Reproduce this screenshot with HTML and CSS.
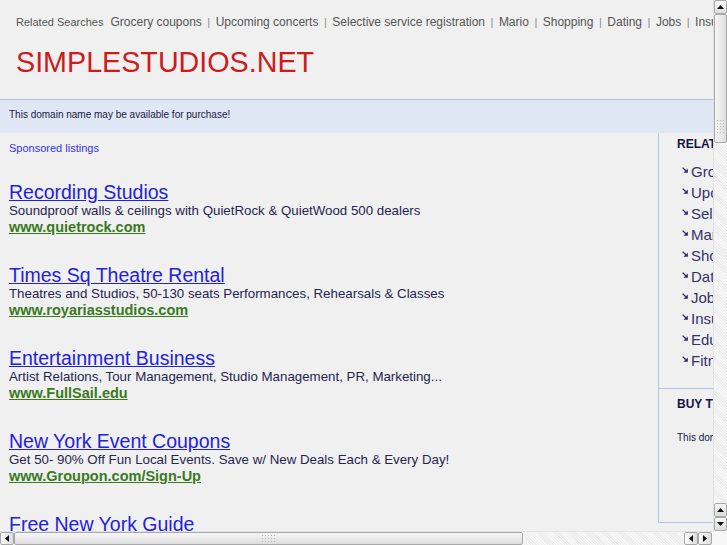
FILE: index.html
```html
<!DOCTYPE html>
<html>
<head>
<meta charset="utf-8">
<title>simplestudios.net</title>
<link rel="stylesheet" href="styles.css">
</head>
<body>
<div class="window">
  <div class="viewport">
    <div class="page">
      <div class="header">
        <div class="topbar"><span class="rs-label">Related Searches</span><a class="tlink">Grocery coupons</a><span class="sep">|</span><a class="tlink">Upcoming concerts</a><span class="sep">|</span><a class="tlink">Selective service registration</a><span class="sep">|</span><a class="tlink">Mario</a><span class="sep">|</span><a class="tlink">Shopping</a><span class="sep">|</span><a class="tlink">Dating</a><span class="sep">|</span><a class="tlink">Jobs</a><span class="sep">|</span><a class="tlink">Insurance</a><span class="sep">|</span><a class="tlink">Education</a><span class="sep">|</span><a class="tlink">Fitness</a></div>
        <h1 class="domain">SIMPLESTUDIOS.NET</h1>
      </div>
      <div class="notice">This domain name may be available for purchase!</div>
      <div class="body">
        <div class="main">
          <div class="sponsored">Sponsored listings</div>
          <div class="listing">
            <a class="ltitle">Recording Studios</a>
            <div class="ldesc">Soundproof walls &amp; ceilings with QuietRock &amp; QuietWood 500 dealers</div>
            <a class="lurl">www.quietrock.com</a>
          </div>
          <div class="listing">
            <a class="ltitle">Times Sq Theatre Rental</a>
            <div class="ldesc">Theatres and Studios, 50-130 seats Performances, Rehearsals &amp; Classes</div>
            <a class="lurl">www.royariasstudios.com</a>
          </div>
          <div class="listing">
            <a class="ltitle">Entertainment Business</a>
            <div class="ldesc">Artist Relations, Tour Management, Studio Management, PR, Marketing...</div>
            <a class="lurl">www.FullSail.edu</a>
          </div>
          <div class="listing">
            <a class="ltitle">New York Event Coupons</a>
            <div class="ldesc">Get 50- 90% Off Fun Local Events. Save w/ New Deals Each &amp; Every Day!</div>
            <a class="lurl">www.Groupon.com/Sign-Up</a>
          </div>
          <div class="listing">
            <a class="ltitle">Free New York Guide</a>
            <div class="ldesc">Get Free Maps, Guides &amp; Tips on New York City with our Free Toolbar.</div>
            <a class="lurl">www.NewYorkCity.com</a>
          </div>
        </div>
        <div class="side">
          <div class="side-sec related">
            <div class="side-h">RELATED SEARCHES</div>
            <ul class="side-list">
              <li><svg class="arr" viewBox="0 0 6 6"><path d="M0.6 0.6 L3.8 3.8" stroke="#2a2a66" stroke-width="1.3"/><path d="M5.8 1.5 L5.8 5.8 L1.5 5.8 Z" fill="#2a2a66"/></svg><a>Grocery coupons</a></li>
              <li><svg class="arr" viewBox="0 0 6 6"><path d="M0.6 0.6 L3.8 3.8" stroke="#2a2a66" stroke-width="1.3"/><path d="M5.8 1.5 L5.8 5.8 L1.5 5.8 Z" fill="#2a2a66"/></svg><a>Upcoming concerts</a></li>
              <li><svg class="arr" viewBox="0 0 6 6"><path d="M0.6 0.6 L3.8 3.8" stroke="#2a2a66" stroke-width="1.3"/><path d="M5.8 1.5 L5.8 5.8 L1.5 5.8 Z" fill="#2a2a66"/></svg><a>Selective service registration</a></li>
              <li><svg class="arr" viewBox="0 0 6 6"><path d="M0.6 0.6 L3.8 3.8" stroke="#2a2a66" stroke-width="1.3"/><path d="M5.8 1.5 L5.8 5.8 L1.5 5.8 Z" fill="#2a2a66"/></svg><a>Mario</a></li>
              <li><svg class="arr" viewBox="0 0 6 6"><path d="M0.6 0.6 L3.8 3.8" stroke="#2a2a66" stroke-width="1.3"/><path d="M5.8 1.5 L5.8 5.8 L1.5 5.8 Z" fill="#2a2a66"/></svg><a>Shopping</a></li>
              <li><svg class="arr" viewBox="0 0 6 6"><path d="M0.6 0.6 L3.8 3.8" stroke="#2a2a66" stroke-width="1.3"/><path d="M5.8 1.5 L5.8 5.8 L1.5 5.8 Z" fill="#2a2a66"/></svg><a>Dating</a></li>
              <li><svg class="arr" viewBox="0 0 6 6"><path d="M0.6 0.6 L3.8 3.8" stroke="#2a2a66" stroke-width="1.3"/><path d="M5.8 1.5 L5.8 5.8 L1.5 5.8 Z" fill="#2a2a66"/></svg><a>Jobs</a></li>
              <li><svg class="arr" viewBox="0 0 6 6"><path d="M0.6 0.6 L3.8 3.8" stroke="#2a2a66" stroke-width="1.3"/><path d="M5.8 1.5 L5.8 5.8 L1.5 5.8 Z" fill="#2a2a66"/></svg><a>Insurance</a></li>
              <li><svg class="arr" viewBox="0 0 6 6"><path d="M0.6 0.6 L3.8 3.8" stroke="#2a2a66" stroke-width="1.3"/><path d="M5.8 1.5 L5.8 5.8 L1.5 5.8 Z" fill="#2a2a66"/></svg><a>Education</a></li>
              <li><svg class="arr" viewBox="0 0 6 6"><path d="M0.6 0.6 L3.8 3.8" stroke="#2a2a66" stroke-width="1.3"/><path d="M5.8 1.5 L5.8 5.8 L1.5 5.8 Z" fill="#2a2a66"/></svg><a>Fitness</a></li>
            </ul>
          </div>
          <div class="side-sec buy">
            <div class="side-h">BUY THIS DOMAIN</div>
            <div class="buy-text">This domain may be for sale by its owner!</div>
          </div>
        </div>
      </div>
    </div>
  </div>
  <div class="vscroll">
    <div class="sbtn"><svg viewBox="0 0 7 4"><path d="M0 4 L3.5 0 L7 4 Z" fill="#111"/></svg></div>
    <div class="vthumb"><div class="grip vgrip"></div></div>
    <div class="vtrack"></div>
    <div class="sbtn"><svg viewBox="0 0 7 4"><path d="M0 4 L3.5 0 L7 4 Z" fill="#111"/></svg></div>
    <div class="sbtn"><svg viewBox="0 0 7 4"><path d="M0 0 L3.5 4 L7 0 Z" fill="#111"/></svg></div>
  </div>
  <div class="hscroll">
    <div class="sbtn"><svg class="h" viewBox="0 0 4 7"><path d="M4 0 L0 3.5 L4 7 Z" fill="#111"/></svg></div>
    <div class="hthumb"><div class="grip hgrip"></div></div>
    <div class="htrack"></div>
    <div class="sbtn"><svg class="h" viewBox="0 0 4 7"><path d="M4 0 L0 3.5 L4 7 Z" fill="#111"/></svg></div>
    <div class="sbtn"><svg class="h" viewBox="0 0 4 7"><path d="M0 0 L4 3.5 L0 7 Z" fill="#111"/></svg></div>
    <div class="hgap"></div>
  </div>
  <div class="corner"></div>
</div>
</body>
</html>
```

FILE: styles.css
```css
html, body {
  margin: 0;
  padding: 0;
  overflow: hidden;
  background: #f0f0f0;
}

.window {
  width: 727px;
  height: 545px;
  display: grid;
  grid-template-columns: 713px 14px;
  grid-template-rows: 531px 14px;
  font-family: "Liberation Sans", Arial, sans-serif;
}

.viewport {
  overflow: hidden;
  background: #f0f0f0;
}

.page {
  width: 940px;
}

/* header */
.header {
  padding: 14px 0 20px 0;
  border-bottom: 1px solid #b4c6e6;
}

.topbar {
  padding-left: 16px;
  display: flex;
  align-items: baseline;
  white-space: nowrap;
  line-height: 16px;
  color: #555;
}

.rs-label {
  font-size: 11px;
  margin-right: 7px;
  color: #555;
}

.tlink {
  font-size: 12px;
  color: #555;
}

.sep {
  font-size: 11px;
  color: #8a8a8a;
  margin: 0 5.5px;
}

.domain {
  margin: 15px 0 0 16px;
  font-weight: normal;
  font-size: 28.7px;
  line-height: 34px;
  color: #cc1c1c;
}

.notice {
  background: #dfe6f4;
  font-size: 10px;
  line-height: 12px;
  color: #1a1a44;
  padding: 9px 0 12px 9px;
}

/* body */
.body {
  display: flex;
  align-items: flex-start;
}

.main {
  width: 658px;
  flex: none;
  padding: 8px 0 0 9px;
  box-sizing: border-box;
}

.sponsored {
  font-size: 11px;
  line-height: 14px;
  color: #3434e0;
  margin-bottom: 27px;
}

.listing {
  margin-bottom: 29px;
}

.ltitle {
  display: block;
  font-size: 19.5px;
  line-height: 20px;
  color: #2222dd;
  text-decoration: underline;
  white-space: nowrap;
}

.ldesc {
  font-size: 13.3px;
  line-height: 17px;
  color: #252550;
  white-space: nowrap;
}

.lurl {
  display: block;
  font-size: 14.5px;
  line-height: 17px;
  font-weight: bold;
  color: #3a7a1e;
  text-decoration: underline;
  white-space: nowrap;
}

/* sidebar */
.side {
  width: 260px;
  flex: none;
  border-left: 1px solid #b4c6e6;
  border-bottom: 1px solid #b4c6e6;
  height: 390px;
  box-sizing: border-box;
  white-space: nowrap;
}

.side-sec {
  padding-left: 18px;
}

.related {
  padding-top: 4px;
  padding-bottom: 17px;
  border-bottom: 1px solid #b4c6e6;
}

.side-h {
  font-size: 12px;
  line-height: 14px;
  font-weight: bold;
  color: #151545;
}

.side-list {
  list-style: none;
  margin: 10px 0 0 0;
  padding: 0 0 0 5px;
}

.side-list li {
  display: flex;
  align-items: center;
  height: 21px;
}

.side-list a {
  font-size: 15px;
  color: #33336a;
}

.arr {
  width: 6px;
  height: 6px;
  margin-right: 3px;
  margin-top: -4px;
  flex: none;
}

.buy {
  padding-top: 8px;
}

.buy-text {
  margin-top: 21px;
  font-size: 10px;
  line-height: 12px;
  color: #1a1a44;
}

/* scrollbars */
.vscroll {
  display: flex;
  flex-direction: column;
  background: #f7f7f7;
  border-left: 1px solid #e2e2e2;
  box-sizing: border-box;
}

.hscroll {
  display: flex;
  background: #f7f7f7;
  border-top: 1px solid #e2e2e2;
  box-sizing: border-box;
}

.corner {
  background: #f7f7f7;
}

.sbtn {
  flex: none;
  width: 13px;
  height: 14px;
  box-sizing: border-box;
  border: 1px solid #a8a8a8;
  border-radius: 2px;
  background: linear-gradient(#fafafa, #dcdcdc);
  display: flex;
  align-items: center;
  justify-content: center;
}

.hscroll .sbtn {
  width: 14px;
  height: 13px;
  background: linear-gradient(90deg, #fafafa, #dcdcdc);
}

.sbtn svg {
  width: 7px;
  height: 4px;
}

.sbtn svg.h {
  width: 4px;
  height: 7px;
}

.vthumb {
  flex: none;
  height: 129px;
  width: 13px;
  box-sizing: border-box;
  border: 1px solid #a8a8a8;
  border-radius: 2px;
  background: linear-gradient(90deg, #f6f6f6, #dedede);
  display: flex;
  flex-direction: column;
  justify-content: flex-end;
  align-items: center;
  padding-bottom: 8px;
}

.vtrack {
  flex: 1;
  background: repeating-linear-gradient(45deg, #f8f8f8 0 1px, #ececec 1px 2px);
}

.hthumb {
  flex: none;
  width: 509px;
  height: 13px;
  box-sizing: border-box;
  border: 1px solid #a8a8a8;
  border-radius: 2px;
  background: linear-gradient(#f6f6f6, #dedede);
  display: flex;
  align-items: center;
  justify-content: center;
}

.htrack {
  flex: 1;
  background: repeating-linear-gradient(45deg, #f8f8f8 0 1px, #ececec 1px 2px);
}

.hgap {
  flex: none;
  width: 1px;
}

.grip {
  background-image: radial-gradient(circle, #b8b8b8 0.6px, transparent 0.9px);
  background-size: 3px 3px;
}

.vgrip {
  width: 9px;
  height: 15px;
}

.hgrip {
  width: 16px;
  height: 9px;
}
```
